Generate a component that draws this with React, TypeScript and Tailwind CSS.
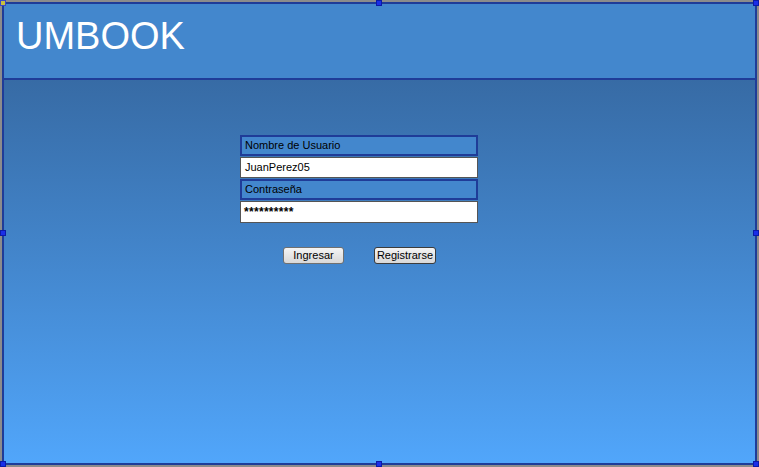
import React from "react";

const handle = "absolute w-[6px] h-[6px] bg-[#1a2ee8] border border-[#0b1aa8]";

export default function App() {
  return (
    <div className="relative w-[759px] h-[467px] border-2 border-[#8c8c8c] bg-[#8c8c8c] font-['Liberation_Sans',Arial,sans-serif]">
      <div className="flex flex-col w-full h-full border-2 border-[#1f3c98]">
        {/* Header */}
        <div className="h-[76px] shrink-0 bg-[#4387cd] border-b-2 border-[#1f3c98] pl-[12px] pt-[10px]">
          <h1 className="text-[38px] leading-[44px] text-white">UMBOOK</h1>
        </div>

        {/* Body */}
        <div className="flex-1 bg-gradient-to-b from-[#376ba5] to-[#51a6fb] pl-[236px] pt-[55px] text-[11px] text-black">
          <div className="flex flex-col w-[238px] gap-[1px]">
            <div className="h-[21px] bg-[#4387cd] border-2 border-[#1f3c98] pl-[3px] flex items-center">
              Nombre de Usuario
            </div>
            <div className="h-[21px] bg-white border border-[#555] pl-[4px] flex items-center">
              JuanPerez05
            </div>
            <div className="h-[21px] bg-[#4387cd] border-2 border-[#1f3c98] pl-[3px] flex items-center">
              Contraseña
            </div>
            <div className="h-[22px] bg-white border border-[#555] pl-[3px] flex items-center text-[12px] font-bold tracking-[0.3px]">
              **********
            </div>
          </div>

          <div className="flex mt-[24px] pl-[43px] gap-[30px]">
            <button className="w-[61px] h-[17px] rounded-[3px] border border-[#707070] bg-gradient-to-b from-[#f4f4f4] to-[#d8d8d8] text-[11px] leading-none">
              Ingresar
            </button>
            <button className="w-[62px] h-[17px] rounded-[3px] border border-[#3c3c3c] bg-gradient-to-b from-[#f4f4f4] to-[#d8d8d8] text-[11px] leading-none">
              Registrarse
            </button>
          </div>
        </div>
      </div>

      {/* Selection handles */}
      <div className="absolute -left-[2px] -top-[2px] w-[6px] h-[6px] bg-[#c8c040] border border-[#3a48c8]" />
      <div className={`${handle} left-[374px] -top-[2px]`} />
      <div className={`${handle} -right-[2px] -top-[2px]`} />
      <div className={`${handle} -left-[2px] top-[228px]`} />
      <div className={`${handle} -right-[2px] top-[228px]`} />
      <div className={`${handle} -left-[2px] -bottom-[2px]`} />
      <div className={`${handle} left-[374px] -bottom-[2px]`} />
      <div className={`${handle} -right-[2px] -bottom-[2px]`} />
    </div>
  );
}
